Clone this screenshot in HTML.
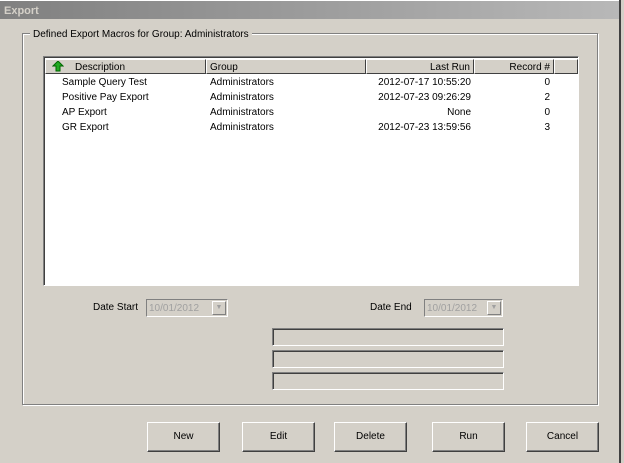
<!DOCTYPE html>
<html><head><style>
*{margin:0;padding:0;box-sizing:border-box}
body{width:624px;height:463px;background:#d4d0c8;font-family:"Liberation Sans",sans-serif;font-size:10px;position:relative;overflow:hidden;color:#000}
.a{position:absolute}
.title{left:0;top:0;width:620px;height:19px;background:linear-gradient(to right,#808080,#b8b8b8);color:#d4d0c8;font-weight:bold;font-size:11px;padding:4px 0 0 4px;border-top:1px solid #fff}
.rb{left:619px;top:0;width:2px;height:463px;background:#404040}
.rb2{left:621px;top:0;width:3px;height:463px;background:#d4d0c8}
.grp{left:22px;top:33px;width:576px;height:372px;border:1px solid #808080;box-shadow:1px 1px 0 #fff inset,1px 1px 0 #fff}
.gl{left:30px;top:29px;background:#d4d0c8;padding:0 3px}
.list{left:43px;top:56px;width:536px;height:230px;background:#fff;border:1px solid;border-color:#808080 #fff #fff #808080;box-shadow:inset 1px 1px 0 #404040}
.hd{top:2px;height:15px;background:#d4d0c8;border:1px solid;border-color:#fff #404040 #404040 #fff;padding:1px 3px 0}
.btn{width:73px;height:30px;border:1px solid;border-color:#fff #404040 #404040 #fff;box-shadow:inset -1px -1px 0 #808080;text-align:center;line-height:28px}
.cb{width:82px;height:18px;border:1px solid;border-color:#808080 #fff #fff #808080;color:#a0a0a0;padding:3px 0 0 2px}
.cb i{position:absolute;right:1px;top:1px;width:14px;height:14px;border:1px solid;border-color:#fff #808080 #808080 #fff;font-style:normal;font-size:7px;text-align:center;line-height:12px;color:#a0a0a0}
.tb{left:272px;width:232px;height:18px;border:1px solid;border-color:#808080 #fff #fff #808080;box-shadow:inset 1px 1px 0 #404040}
</style></head><body>
<div class="a title">Export</div>
<div class="a rb"></div><div class="a rb2"></div>
<div class="a grp"></div>
<div class="a gl">Defined Export Macros for Group: Administrators</div>
<div class="a list">
<div class="a hd" style="left:1px;width:161px"><svg width="12" height="11" style="position:absolute;left:6px;top:1px"><path d="M6 0L11 5H8V10H4V5H1Z" fill="#2a2" stroke="#060" stroke-width="1"/></svg><span style="position:absolute;left:29px;top:2px">Description</span></div>
<div class="a hd" style="left:162px;width:160px;padding-top:2px">Group</div>
<div class="a hd" style="left:322px;width:108px;text-align:right;padding-top:2px">Last Run</div>
<div class="a hd" style="left:430px;width:80px;text-align:right;padding-top:2px">Record #</div>
<div class="a hd" style="left:510px;width:24px"></div>
<div class="a" style="left:18px;top:18px;line-height:15px">Sample Query Test<br>Positive Pay Export<br>AP Export<br>GR Export</div>
<div class="a" style="left:166px;top:18px;line-height:15px">Administrators<br>Administrators<br>Administrators<br>Administrators</div>
<div class="a" style="left:300px;width:127px;top:18px;line-height:15px;text-align:right">2012-07-17 10:55:20<br>2012-07-23 09:26:29<br>None<br>2012-07-23 13:59:56</div>
<div class="a" style="left:440px;width:66px;top:18px;line-height:15px;text-align:right">0<br>2<br>0<br>3</div>
</div>
<div class="a" style="left:93px;top:302px">Date Start</div>
<div class="a cb" style="left:146px;top:299px">10/01/2012<i>&#9660;</i></div>
<div class="a" style="left:370px;top:302px">Date End</div>
<div class="a cb" style="left:424px;top:299px;width:79px">10/01/2012<i>&#9660;</i></div>
<div class="a tb" style="top:328px"></div>
<div class="a tb" style="top:350px"></div>
<div class="a tb" style="top:372px"></div>
<div class="a btn" style="left:147px;top:422px">New</div>
<div class="a btn" style="left:242px;top:422px">Edit</div>
<div class="a btn" style="left:334px;top:422px">Delete</div>
<div class="a btn" style="left:432px;top:422px">Run</div>
<div class="a btn" style="left:526px;top:422px">Cancel</div>
</body></html>
